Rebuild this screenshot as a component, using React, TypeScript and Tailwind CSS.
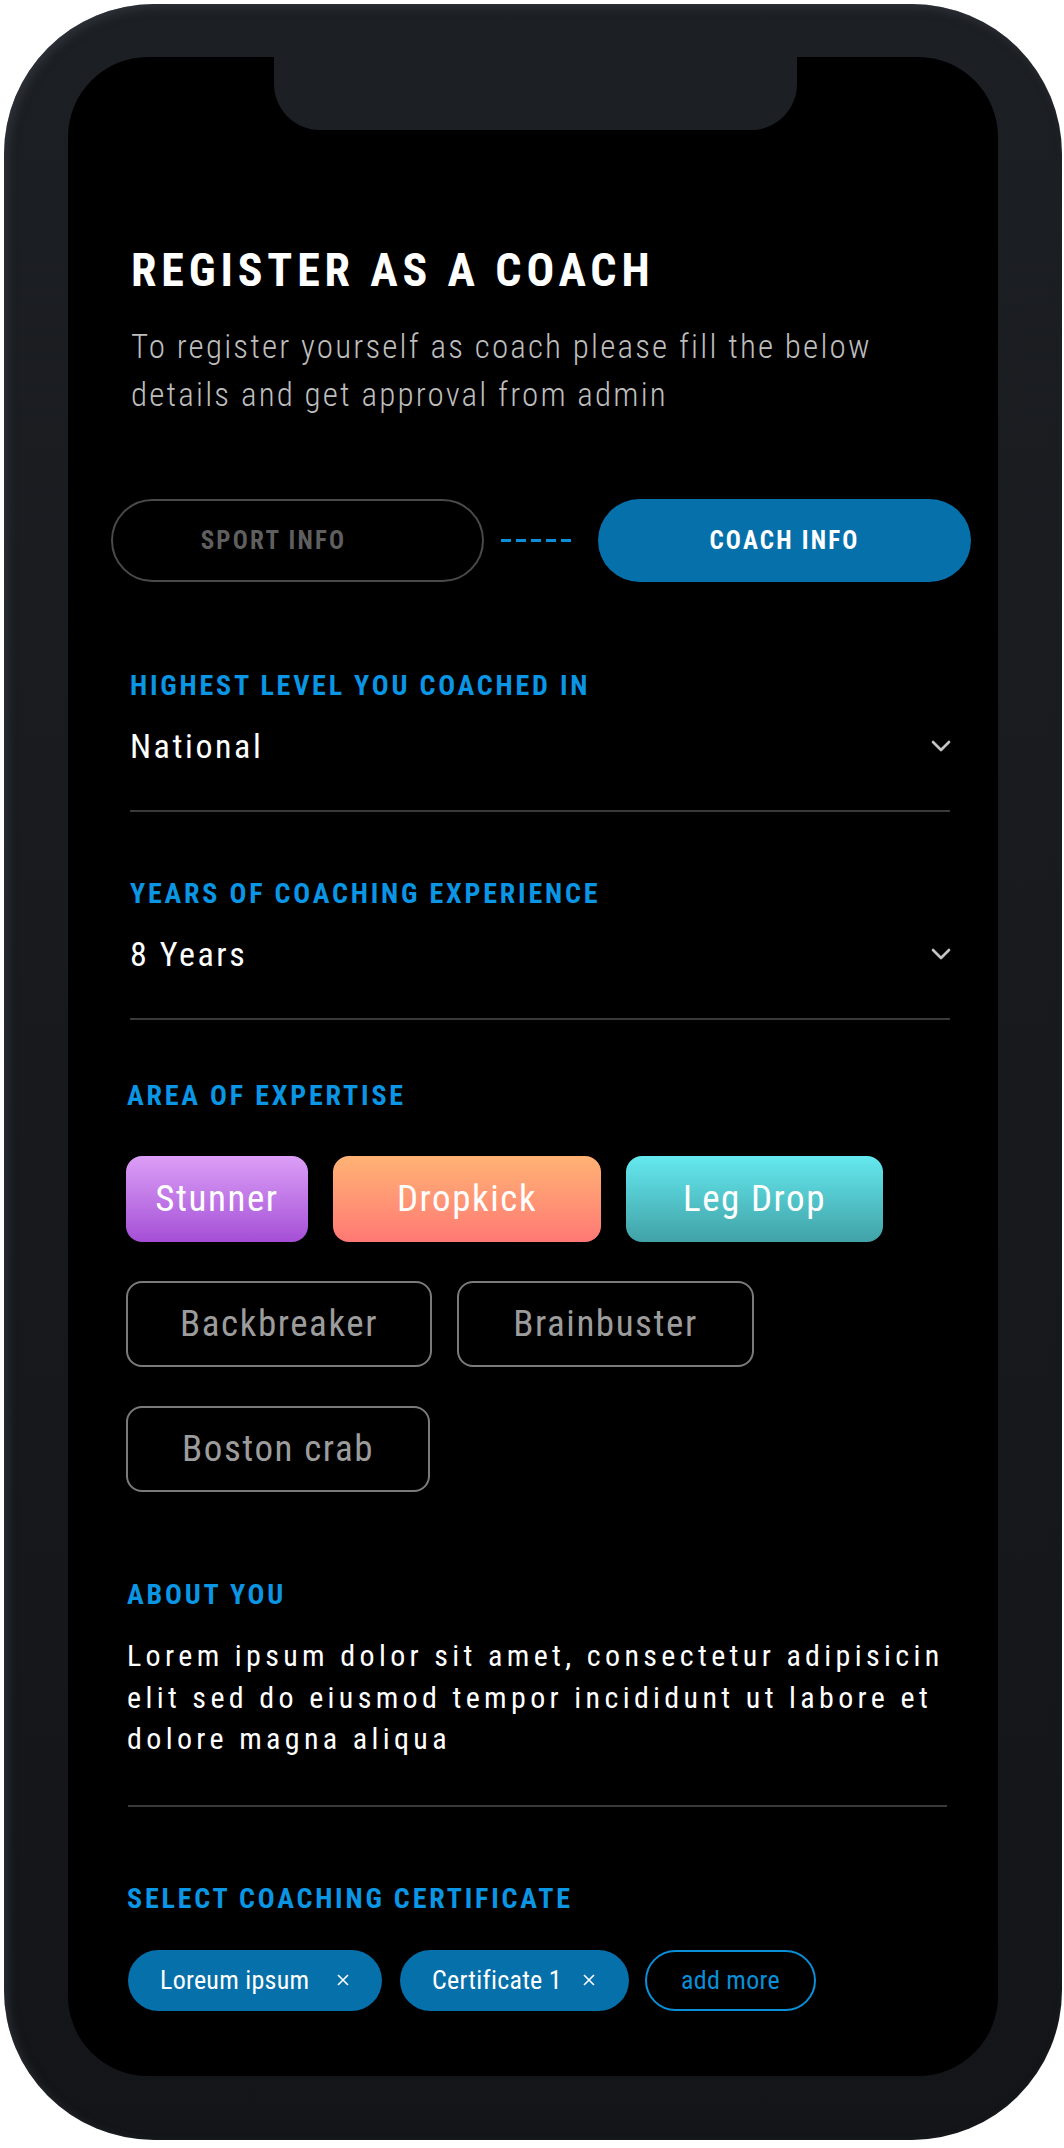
import { useState } from "react";

type Chip = {
  label: string;
  width: string;
  className: string;
};

const chips: Chip[] = [
  {
    label: "Stunner",
    width: "w-[182px]",
    className: "bg-gradient-to-b from-[#dc9ef6] to-[#a54ed6] text-white",
  },
  {
    label: "Dropkick",
    width: "w-[268px]",
    className: "bg-gradient-to-b from-[#ffb274] to-[#ff7874] text-white",
  },
  {
    label: "Leg Drop",
    width: "w-[257px]",
    className: "bg-gradient-to-b from-[#64e9ef] to-[#41a2a7] text-white",
  },
  {
    label: "Backbreaker",
    width: "w-[306px]",
    className: "border-2 border-[#7a7a7a] text-[#9c9c9c]",
  },
  {
    label: "Brainbuster",
    width: "w-[297px]",
    className: "border-2 border-[#7a7a7a] text-[#9c9c9c]",
  },
  {
    label: "Boston crab",
    width: "w-[304px]",
    className: "border-2 border-[#7a7a7a] text-[#9c9c9c]",
  },
];

const font = "font-['Roboto_Condensed','Roboto',sans-serif] font-stretch-condensed";

function Chevron() {
  return (
    <svg width="20" height="12" viewBox="0 0 20 12" className="mr-[-1px]">
      <polyline
        points="2,2 10,10 18,2"
        fill="none"
        stroke="#c4c4c4"
        strokeWidth="2.6"
        strokeLinecap="round"
        strokeLinejoin="round"
      />
    </svg>
  );
}

function Cross() {
  return (
    <svg width="14" height="14" viewBox="0 0 14 14">
      <path d="M2 2 L12 12 M12 2 L2 12" stroke="#ffffff" strokeWidth="1.6" />
    </svg>
  );
}

function Label({ children, className = "" }: { children: string; className?: string }) {
  return (
    <div
      className={`text-[28px] leading-[28px] font-bold tracking-[0.1em] text-[#0a96e4] ${className}`}
    >
      {children}
    </div>
  );
}

function Select({ value }: { value: string }) {
  return (
    <div className="mt-[29px] flex items-center justify-between">
      <span className="text-[34px] leading-[34px] tracking-[0.075em] text-white">{value}</span>
      <Chevron />
    </div>
  );
}

export default function App() {
  const [step] = useState(1);

  return (
    <div className={`w-[1064px] h-[2148px] bg-white p-[4px] ${font}`}>
      {/* phone body */}
      <div className="h-[2136px] w-[1058px] rounded-[150px] bg-gradient-to-b from-[#1c1f23] to-[#131518] pt-[53px] pl-[64px] pr-[64px] pb-[64px] shadow-[inset_4px_4px_10px_rgba(60,66,74,0.55)]">
        {/* screen */}
        <div className="relative h-[2019px] w-[930px] rounded-[80px] bg-black pl-[62px] pr-[48px] pt-[190px]">
          {/* notch */}
          <div className="absolute left-[206px] top-0 h-[73px] w-[523px] rounded-b-[46px] bg-[#1c1f23]" />

          <h1 className="ml-[1px] text-[46px] leading-[46px] font-bold tracking-[0.105em] text-white">
            REGISTER AS A COACH
          </h1>
          <p className="ml-[1px] mt-[30px] text-[33px] leading-[48px] font-light tracking-[0.066em] text-[#bdbdbd]">
            To register yourself as coach please fill the below
            <br />
            details and get approval from admin
          </p>

          {/* stepper */}
          <div className="mt-[80px] ml-[-19px] flex h-[83px] w-[860px] items-center">
            <div
              className={`flex h-[83px] w-[373px] items-center justify-center rounded-full border-2 border-[#4a4a4a] pr-[48px] text-[25px] font-bold tracking-[0.088em] ${
                step === 0 ? "text-white" : "text-[#5f5f5f]"
              }`}
            >
              SPORT INFO
            </div>
            <div className="flex w-[114px] justify-start gap-[5px] pl-[17px]">
              {[0, 1, 2, 3, 4].map((i) => (
                <span key={i} className="h-[3px] w-[10px] bg-[#0a8fd8]" />
              ))}
            </div>
            <div className="flex h-[83px] w-[373px] items-center justify-center rounded-full bg-[#0670ab] text-[25px] font-bold tracking-[0.088em] text-white">
              COACH INFO
            </div>
          </div>

          <Label className="mt-[90px]">HIGHEST LEVEL YOU COACHED IN</Label>
          <Select value="National" />
          <div className="mt-[47px] h-[2px] bg-[#3a3a3a]" />

          <Label className="mt-[68px]">YEARS OF COACHING EXPERIENCE</Label>
          <Select value="8 Years" />
          <div className="mt-[47px] h-[2px] bg-[#3a3a3a]" />

          <Label className="mt-[62px] ml-[-3px]">AREA OF EXPERTISE</Label>
          <div className="mt-[46px] ml-[-4px] flex flex-wrap gap-x-[25px] gap-y-[39px]">
            {chips.map((c) => (
              <div
                key={c.label}
                className={`flex h-[86px] items-center justify-center rounded-[16px] text-[37px] tracking-[0.042em] ${c.width} ${c.className}`}
              >
                {c.label}
              </div>
            ))}
          </div>

          <Label className="mt-[89px] ml-[-3px]">ABOUT YOU</Label>
          <p className="ml-[-3px] mr-[-40px] mt-[26px] whitespace-nowrap text-[30px] leading-[41.5px] tracking-[0.145em] text-white">
            Lorem ipsum dolor sit amet, consectetur adipisicin
            <br />
            elit sed do eiusmod tempor incididunt ut labore et
            <br />
            dolore magna aliqua
          </p>
          <div className="ml-[-2px] mt-[45px] h-[2px] w-[819px] bg-[#3a3a3a]" />

          <Label className="mt-[78px] ml-[-3px]">SELECT COACHING CERTIFICATE</Label>
          <div className="ml-[-2px] mt-[37px] flex items-center">
            <div className="flex h-[61px] w-[254px] items-center rounded-full bg-[#0670ab] pl-[32px] text-[26px] tracking-[0.01em] text-white">
              <span className="w-[176px]">Loreum ipsum</span>
              <Cross />
            </div>
            <div className="ml-[18px] flex h-[61px] w-[229px] items-center rounded-full bg-[#0670ab] pl-[32px] text-[26px] tracking-[0.01em] text-white">
              <span className="w-[150px]">Certificate 1</span>
              <Cross />
            </div>
            <div className="ml-[16px] flex h-[61px] w-[171px] items-center justify-center rounded-full border-2 border-[#0a8fd8] text-[26px] tracking-[0.01em] text-[#0a8fd8]">
              add more
            </div>
          </div>
        </div>
      </div>
    </div>
  );
}
